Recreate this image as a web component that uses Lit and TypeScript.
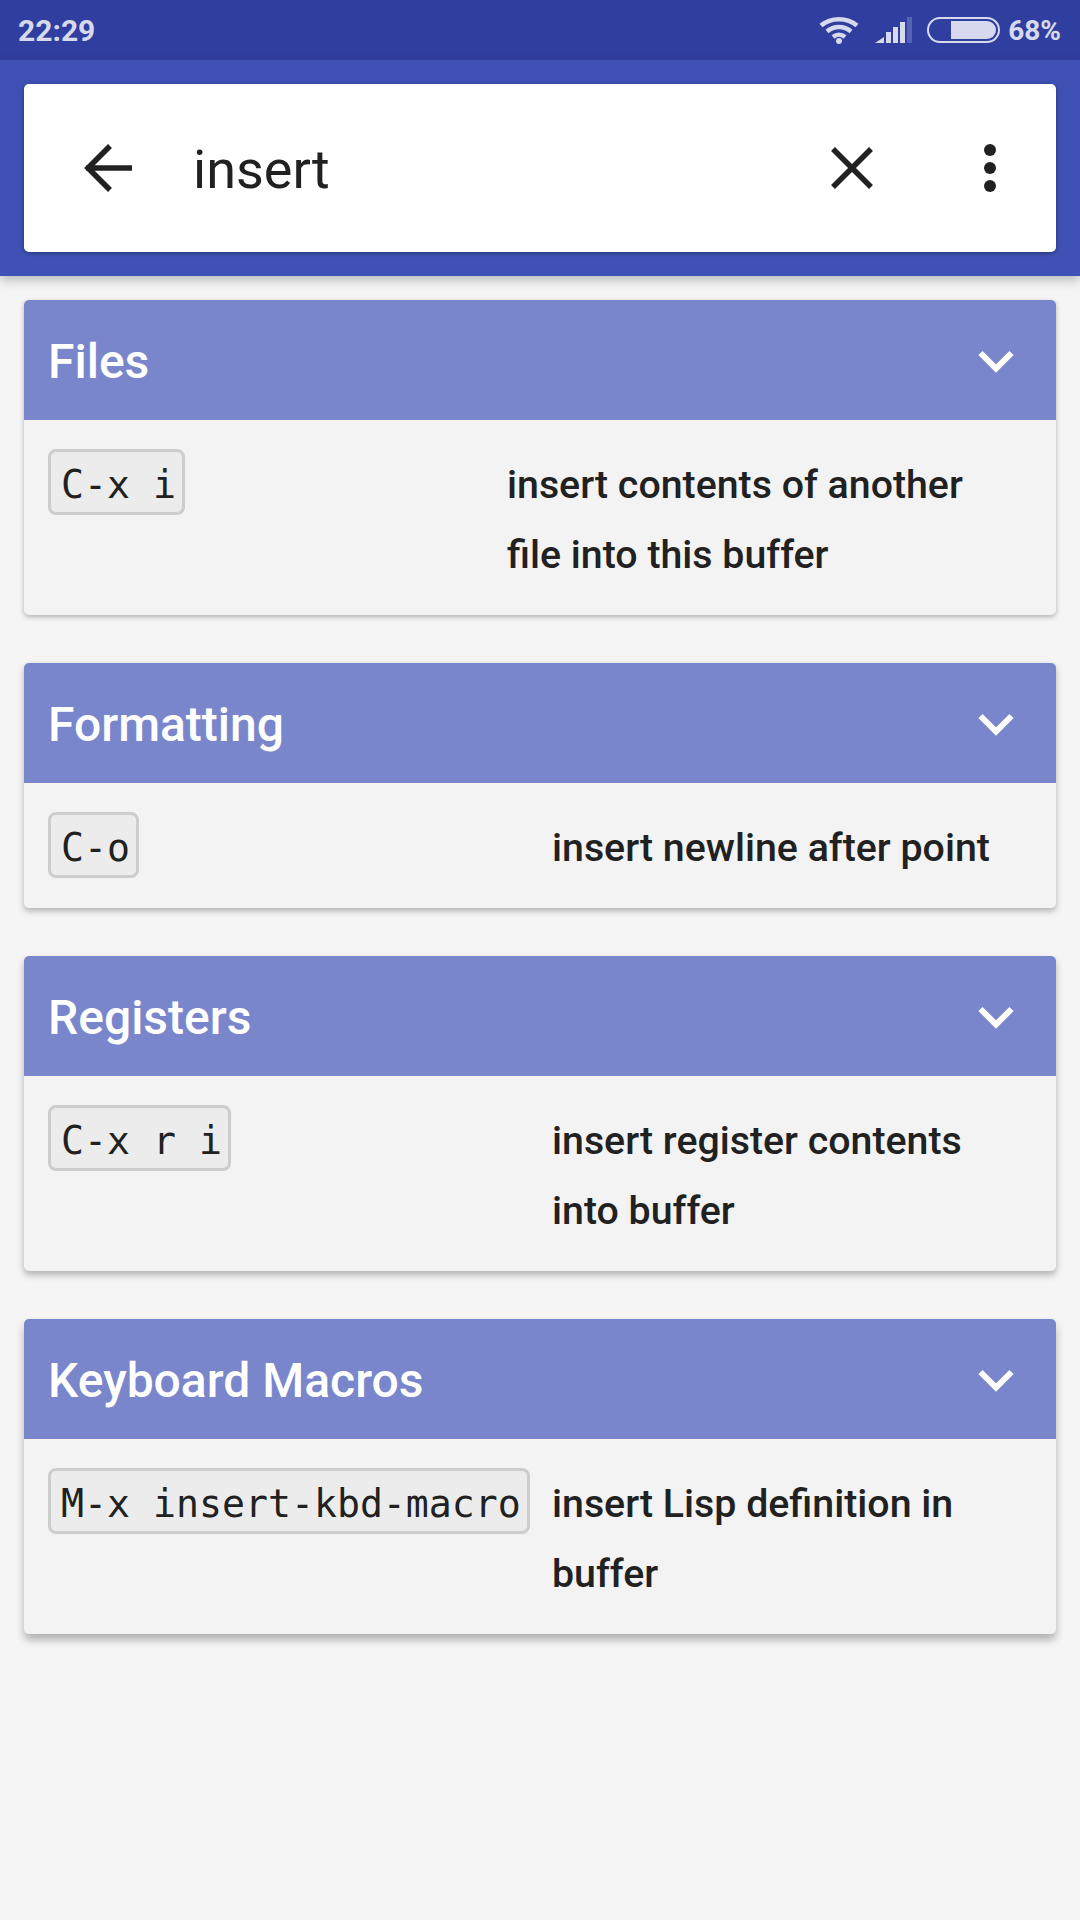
import { LitElement, html, css } from "lit";
import { customElement } from "lit/decorators.js";

interface Section {
  title: string;
  keys: string;
  keyWidth: number; // width of the key column, the text starts after it
  lift: number; // the cards lower on the page throw a bigger shadow
  text: string[];
}

const sections: Section[] = [
  { title: "Files", keys: "C-x i", keyWidth: 459, lift: 2, text: ["insert contents of another", "file into this buffer"] },
  { title: "Formatting", keys: "C-o", keyWidth: 504, lift: 3, text: ["insert newline after point"] },
  { title: "Registers", keys: "C-x r i", keyWidth: 504, lift: 4, text: ["insert register contents", "into buffer"] },
  { title: "Keyboard Macros", keys: "M-x insert-kbd-macro", keyWidth: 504, lift: 6, text: ["insert Lisp definition in", "buffer"] },
];

@customElement("app-root")
export class AppRoot extends LitElement {
  static styles = css`
    :host {
      display: block;
      width: 1080px;
      height: 1920px;
      background: #f5f5f5;
      font-family: Roboto, sans-serif;
      color: #212121;
      overflow: hidden;
    }
    .status {
      height: 60px;
      background: #303f9f;
      color: #d7daee;
      display: flex;
      align-items: center;
      padding: 0 19px 0 18px;
      font-size: 28px;
      font-weight: 700;
    }
    .time {
      flex: 1;
      font-size: 30px;
    }
    .wifi {
      width: 40px;
      height: 28px;
      margin-right: 16px;
    }
    .signal {
      width: 38px;
      height: 26px;
      margin-right: 14px;
    }
    .battery {
      width: 73px;
      height: 26px;
      margin-right: 8px;
    }
    .toolbar {
      height: 216px;
      box-sizing: border-box;
      padding: 24px;
      background: #3f51b5;
      box-shadow: 0 4px 10px rgba(0, 0, 0, 0.25);
      position: relative;
    }
    .search {
      height: 168px;
      background: #fff;
      border-radius: 5px;
      box-shadow: 0 1px 4px rgba(0, 0, 0, 0.4);
      display: flex;
      align-items: center;
    }
    .search svg {
      flex: none;
    }
    .back {
      width: 48px;
      height: 48px;
      margin-left: 60px;
    }
    .query {
      flex: 1;
      margin-left: 61px;
      font-size: 54px;
      padding-top: 2px;
    }
    .clear {
      width: 44px;
      height: 44px;
      margin-right: 109px;
    }
    .more {
      width: 14px;
      height: 50px;
      margin-right: 59px;
    }
    .list {
      display: flex;
      flex-direction: column;
      gap: 48px;
      padding: 24px 24px 0;
    }
    .card {
      background: #f3f3f3;
      border-radius: 5px;
      overflow: hidden;
    }
    .head {
      height: 120px;
      box-sizing: border-box;
      padding: 2px 24px 0;
      background: #7986cb;
      color: #fff;
      display: flex;
      align-items: center;
      font-size: 48px;
      font-weight: 500;
    }
    .head span {
      flex: 1;
    }
    .chev {
      width: 38px;
      height: 24px;
      margin-right: 17px;
    }
    .row {
      display: flex;
      align-items: flex-start;
      padding: 29px 24px 25px;
    }
    .key {
      flex: none;
    }
    kbd {
      display: inline-block;
      box-sizing: border-box;
      height: 66px;
      line-height: 66px;
      padding: 0 6px 0 10px;
      background: #ececec;
      border: 3px solid #cdcdcd;
      border-radius: 8px;
      font-family: "DejaVu Sans Mono", monospace;
      font-size: 38.2px;
      color: #212121;
    }
    .text {
      padding-top: 1px;
      font-size: 39.3px;
      font-weight: 500;
      line-height: 70px;
    }
  `;

  render() {
    return html`
      <div class="status">
        <div class="time">22:29</div>
        <svg class="wifi" viewBox="0 0 40 28" fill="none" stroke="#d7daee" stroke-width="4.500">
          <path d="M2 9.500C12 1 28 1 38 9.500" />
          <path d="M8 15.500C15 9.500 25 9.500 32 15.500" />
          <path d="M14 21C17.500 18 22.500 18 26 21" />
          <circle cx="20" cy="25" r="3" fill="#d7daee" stroke="none" />
        </svg>
        <svg class="signal" viewBox="0 0 38 26" fill="#d7daee">
          <path d="M0 26 9 20V26Z" />
          <rect x="11" y="15" width="5" height="11" />
          <rect x="18" y="10" width="5" height="16" />
          <rect x="25" y="5" width="5" height="21" />
          <rect x="32" y="0" width="5" height="26" fill="#5663b4" />
        </svg>
        <svg class="battery" viewBox="0 0 73 26">
          <rect x="1" y="1" width="71" height="24" rx="12" fill="none" stroke="#d7daee" stroke-width="2" />
          <path d="M24 4H60a9 9 0 0 1 0 18H24Z" fill="#d7daee" />
        </svg>
        <div>68%</div>
      </div>
      <div class="toolbar">
        <div class="search">
          <svg class="back" viewBox="0 0 48 48" fill="none" stroke="#212121" stroke-width="5.500">
            <path d="M2 24H48M26 2 4 24 26 46" />
          </svg>
          <div class="query">insert</div>
          <svg class="clear" viewBox="0 0 44 44" fill="none" stroke="#212121" stroke-width="5.500">
            <path d="M3 3 41 41M41 3 3 41" />
          </svg>
          <svg class="more" viewBox="0 0 14 50" fill="#212121">
            <circle cx="7" cy="7" r="6" />
            <circle cx="7" cy="25" r="6" />
            <circle cx="7" cy="43" r="6" />
          </svg>
        </div>
      </div>
      <div class="list">
        ${sections.map(
          (s) => html`
            <div class="card" style="box-shadow:0 ${s.lift}px ${s.lift + 3}px rgba(0,0,0,0.28)">
              <div class="head">
                <span>${s.title}</span>
                <svg class="chev" viewBox="0 0 38 24" fill="none" stroke="#fff" stroke-width="6">
                  <path d="M3.500 4 19 19.500 34.500 4" />
                </svg>
              </div>
              <div class="row">
                <div class="key" style="width:${s.keyWidth}px"><kbd>${s.keys}</kbd></div>
                <div class="text">${s.text.map((line) => html`<div>${line}</div>`)}</div>
              </div>
            </div>
          `
        )}
      </div>
    `;
  }
}
